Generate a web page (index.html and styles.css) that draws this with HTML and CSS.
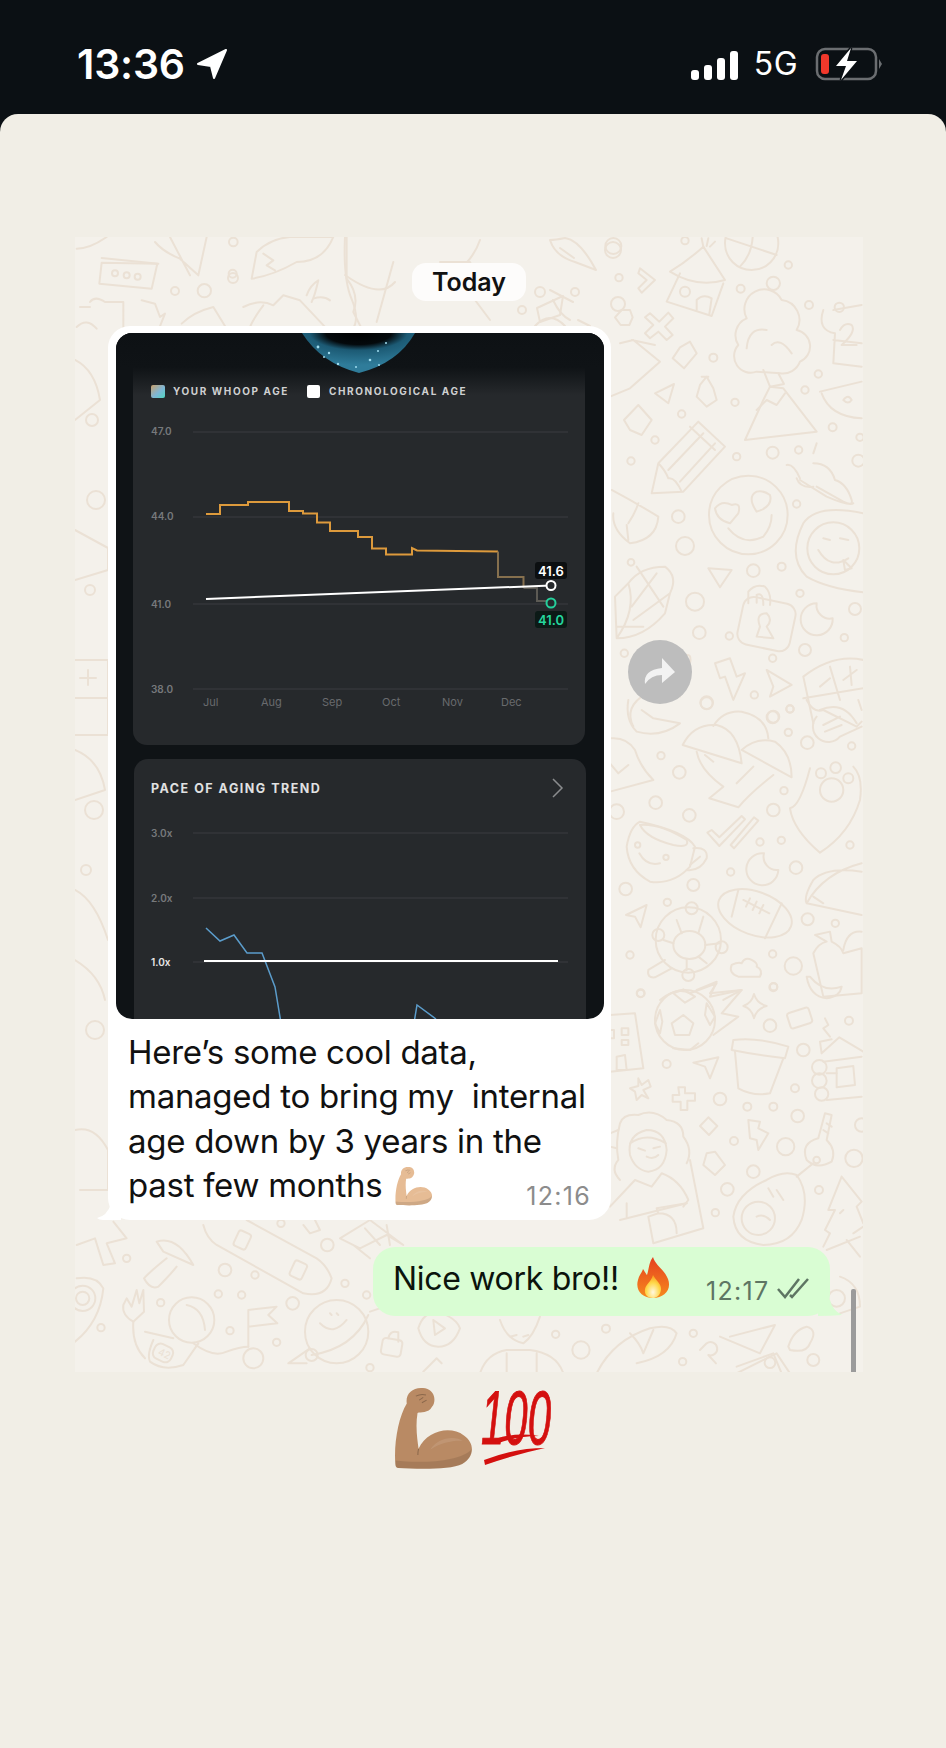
FILE: index.html
```html
<!doctype html>
<html lang="en">
  <head>
    <meta charset="UTF-8" />
    <meta name="viewport" content="width=device-width, initial-scale=1.0" />
    <title>Chat</title>
    <link rel="stylesheet" href="styles.css">
  </head>
  <body>
    <svg class="defs" width="0" height="0">
      <defs>
        <symbol id="arm" viewBox="0 0 232 250">
          <path fill="currentColor" d="M1 232C-4 172 10 92 35 52C30 22 55 0 90 7C120 14 123 47 110 62C100 82 75 77 67 80C60 122 67 162 70 187C95 132 165 117 205 147C240 172 235 212 200 232C165 250 65 247 10 244Q1 244 1 232Z"/>
          <path fill="#000" fill-opacity=".1" d="M1 232C3 240 5 244 10 244C65 247 165 250 200 232C220 220 228 205 228 188C200 222 90 232 1 222Z"/>
          <path fill="#fff" fill-opacity=".1" d="M105 190C125 155 175 145 205 165C190 160 140 165 105 190Z"/>
          <path fill="none" stroke="#000" stroke-opacity=".25" stroke-width="3" d="M70 187Q68 195 68 205M62 30Q78 22 92 27M72 42L84 34M80 50L94 42"/>
        </symbol>
        <linearGradient id="flame" x1="0" y1="0" x2="0" y2="1">
          <stop offset="0" stop-color="#e5401f"/>
          <stop offset="1" stop-color="#f68a1e"/>
        </linearGradient>
        <radialGradient id="flameCore" cx=".5" cy=".75" r=".7">
          <stop offset="0" stop-color="#fff8e0"/>
          <stop offset=".6" stop-color="#ffd84a"/>
          <stop offset="1" stop-color="#fba01f"/>
        </radialGradient>
        <linearGradient id="swatch" x1="0" y1="0" x2="1" y2="1">
          <stop offset="0" stop-color="#c9a06a"/>
          <stop offset=".55" stop-color="#7fb6d6"/>
          <stop offset="1" stop-color="#4fd6c0"/>
        </linearGradient>
        <radialGradient id="orb" cx=".5" cy="0" r=".8">
          <stop offset="0" stop-color="#000"/>
          <stop offset=".36" stop-color="#04090c"/>
          <stop offset=".54" stop-color="#1c5a74"/>
          <stop offset="1" stop-color="#2f7c9a"/>
        </radialGradient>
        <linearGradient id="topShade" x1="0" y1="0" x2="0" y2="1">
          <stop offset="0" stop-color="#0d1114"/>
          <stop offset=".55" stop-color="#0f1316"/>
          <stop offset="1" stop-color="#0f1316" stop-opacity="0"/>
        </linearGradient>
      </defs>
    </svg>

    <header class="status-bar">
      <div class="status-left">
        <span class="clock">13:36</span>
        <svg class="location" width="32" height="32" viewBox="0 0 32 32">
          <path d="M30 2L2 16L15 18L18 30Z"/>
        </svg>
      </div>
      <div class="status-right">
        <div class="signal">
          <span class="bar bar-1"></span>
          <span class="bar bar-2"></span>
          <span class="bar bar-3"></span>
          <span class="bar bar-4"></span>
        </div>
        <span class="network">5G</span>
        <svg class="battery" width="67" height="34" viewBox="0 0 67 34">
          <rect x="2" y="2" width="59" height="30" rx="8" fill="none" stroke="#6b6e71" stroke-width="2.5"/>
          <rect x="6" y="7" width="8" height="20" rx="3" fill="#f0382b"/>
          <path class="bolt" d="M36 1L21 19H31L26 33L42 14H32Z"/>
          <path d="M64 12L67 17L64 22Z" fill="#6b6e71"/>
        </svg>
      </div>
    </header>

    <main class="sheet">
      <section class="chat">
        <svg class="wallpaper" viewBox="75 237 788 1135" width="788" height="1135">
          <!-- top middle -->
          <g>
            <path d="M345 237Q343 280 352 300Q360 320 352 330M480 240Q470 270 432 285M345 275Q380 300 395 282"/>
            <path d="M550 240Q555 256 575 262L596 270Q580 240 565 238Q555 240 550 240ZM560 248L574 258M550 290L573 302"/>
            <path d="M455 290Q480 280 470 262L440 262M475 300L490 320"/>
            <circle cx="613" cy="250" r="8"/><circle cx="233" cy="278" r="5"/><circle cx="575" cy="292" r="4"/>
            <circle cx="540" cy="292" r="5"/><circle cx="618" cy="304" r="7"/><circle cx="522" cy="310" r="4"/>
            <path d="M553 300Q560 315 570 320M578 320L590 326M535 326Q550 310 565 326"/>
            <path d="M537 308L563 296L560 315L540 322Z"/>
          </g>

          <!-- left strip -->
          <g>
            <path d="M75 660H108V735H75M75 698H108M88 670V685M80 678H96M75 890Q95 900 108 940M75 1130Q95 1125 108 1150V1190H80"/>
            <circle cx="92" cy="420" r="6"/><circle cx="96" cy="500" r="9"/><circle cx="90" cy="590" r="5"/>
            <circle cx="94" cy="810" r="9"/><circle cx="86" cy="870" r="5"/><circle cx="95" cy="1030" r="9"/>
            <path d="M75 360Q95 370 100 400L75 420M75 960Q100 975 105 1000M75 530L108 548V570L75 580M75 750Q100 760 105 790L75 800"/>
          </g>

          <g transform="translate(70 232) scale(.3333)">
            <path d="M95 92L262 95L245 170L88 155Z"/><path d="M95 78L265 95"/>
            <circle cx="135" cy="124" r="9"/><circle cx="170" cy="130" r="9"/><circle cx="203" cy="134" r="9"/>
            <path d="M20 50Q60 50 110 15M255 30Q280 60 330 80L385 130L410 15M300 15L360 130"/>
            <path d="M545 140L560 60Q600 20 660 15L790 15Q760 90 680 90Q610 130 545 140ZM580 65L610 85L590 100L615 115"/>
            <path d="M830 15V140Q870 190 850 240L880 300M970 90L920 270"/>
            <path d="M520 225Q570 200 610 220L640 190L690 205L770 290M710 190Q720 160 745 145Q735 190 725 210M730 200Q760 190 780 205M580 220Q550 260 540 285"/>
            <circle cx="490" cy="30" r="13"/><circle cx="488" cy="125" r="12"/><circle cx="403" cy="176" r="20"/><circle cx="315" cy="177" r="12"/>
            <path d="M30 225H60M60 210Q75 190 105 210H160V290M215 205L255 215L270 255L285 245L265 295M335 275Q370 240 430 225L470 290M20 285Q50 255 80 290"/>
          </g>

          <g transform="translate(600 230) scale(.3333)">
            <path d="M240 130L200 215L335 258L370 160"/>
            <path d="M210 125Q260 95 310 50L375 150Q290 175 210 125Z"/>
            <path d="M290 240V210Q310 190 335 205L328 252M310 50L305 25M320 48L325 25M330 50L345 35"/>
            <circle cx="255" cy="185" r="15"/>
            <circle cx="455" cy="40" r="80"/><path d="M380 25L530 75M420 110Q470 60 455 -30"/>
            <path d="M150 250L178 275L205 248L220 265L195 290L218 315L200 330L175 305L150 325L135 310L160 285L135 262Z"/>
            <path d="M65 240H90L98 262L88 285H62L45 262Z"/>
            <path d="M120 115L165 150L125 188L115 175L140 150L115 130Z"/>
            <path d="M240 352L270 335L290 370L252 415L218 385Z"/>
            <path d="M300 465L320 440L340 475L350 510L320 530L290 500ZM305 440H325"/>
            <path d="M165 490L222 462L205 520Z"/>
            <path d="M72 570L115 525L155 570L125 615L90 600Z"/>
            <path d="M60 340L100 330L180 395L90 475L30 500M95 330L165 345"/>
            <path d="M470 425A50 50 0 0 1 415 345A55 55 0 0 1 440 265A55 55 0 0 1 545 210A60 60 0 0 1 590 300A50 50 0 0 1 600 395A55 55 0 0 1 540 430Z"/>
            <path d="M440 355Q445 290 500 300M515 345Q540 320 575 370M490 420L510 470L552 462L535 430"/>
            <path d="M435 630L650 605L550 475L510 470L490 510Z"/>
            <path d="M470 540L500 510L530 525L555 490"/>
            <path d="M700 240L785 225M670 240Q650 300 705 310L700 400L785 410M700 330L785 340"/>
            <circle cx="718" cy="232" r="14"/>
            <path d="M720 300Q735 275 755 285Q770 305 725 345H770"/>
            <path d="M660 485L785 455M665 490Q690 560 785 565M730 510Q745 490 755 510Q745 525 730 510Z"/>
            <path d="M155 790L175 700L295 575L375 650L250 785ZM175 700Q195 720 205 745Q225 740 245 785M205 720L310 610M240 755L345 640M270 590L345 660"/>
            <circle cx="445" cy="855" r="118"/>
            <path d="M390 880Q350 870 345 835Q365 810 395 825Q425 815 415 850Z"/>
            <path d="M470 845Q440 800 470 785Q490 780 510 795Q520 830 470 845Z"/>
            <path d="M385 895Q430 950 490 920Q515 890 515 855"/>
            <path d="M35 780Q110 820 175 860Q170 930 90 940Q35 900 40 850M85 880Q105 850 115 820M85 930L80 885"/>
            <path d="M650 770L730 815Q760 830 755 810Q740 760 705 750Q690 700 640 700M640 670L650 640M600 745Q580 700 560 705M600 750L680 800Q750 830 760 820M590 745Q600 775 640 770"/>
            <path d="M790 850Q650 820 610 880Q560 980 620 1040Q680 1075 790 1087"/>
            <circle cx="700" cy="955" r="78"/>
            <path d="M655 960Q690 1020 745 985M670 925L690 930M720 925L745 930M730 990L755 1015L735 1020Z"/>
            <path d="M50 1225L45 1100L85 1060Q120 1010 195 1010Q235 1040 210 1090L195 1150Q130 1225 50 1225ZM110 1010L190 1130M85 1060Q110 1140 50 1225M130 1190L50 1190M210 1090L100 1170M170 1030L95 1130"/>
            <path d="M325 1015L395 1020L360 1072Z"/>
            <rect x="420" y="1110" width="160" height="145" rx="32" transform="rotate(12 500 1180)"/>
            <path d="M445 1120V1085Q465 1060 495 1070Q515 1090 510 1125M470 1118V1095Q490 1085 490 1125M480 1190Q465 1150 500 1150Q520 1170 500 1190L520 1225L470 1220Z"/>
            <path d="M650 1120A48 48 0 1 0 698 1165A40 40 0 0 1 650 1120Z"/>
            <path d="M345 1300L390 1285L410 1340L435 1330L400 1410L375 1340L360 1345Z"/>
            <path d="M500 1320L575 1365L510 1400L520 1370Z"/>
            <path d="M610 1340Q700 1270 790 1290M610 1340L640 1480M690 1310L720 1410M610 1405L790 1375M660 1370L690 1345M730 1350L770 1320M750 1310L755 1365M660 1440Q730 1410 770 1480"/>
            <path d="M100 1490Q70 1430 140 1390Q200 1360 240 1400M220 1300Q280 1250 270 1300"/>
            <circle cx="40" cy="48" r="24"/><circle cx="255" cy="32" r="11"/><circle cx="57" cy="143" r="11"/>
            <circle cx="565" cy="105" r="11"/><circle cx="520" cy="160" r="20"/><circle cx="422" cy="176" r="12"/>
            <circle cx="627" cy="225" r="12"/><circle cx="655" cy="432" r="11"/><circle cx="615" cy="480" r="11"/>
            <circle cx="340" cy="383" r="12"/><circle cx="405" cy="517" r="11"/><circle cx="245" cy="552" r="11"/>
            <circle cx="165" cy="630" r="11"/><circle cx="93" cy="693" r="11"/><circle cx="410" cy="680" r="11"/>
            <circle cx="518" cy="668" r="18"/><circle cx="596" cy="660" r="11"/><circle cx="698" cy="592" r="12"/>
            <circle cx="780" cy="622" r="11"/><circle cx="775" cy="692" r="18"/><circle cx="235" cy="860" r="19"/>
            <circle cx="255" cy="948" r="27"/><circle cx="93" cy="997" r="10"/><circle cx="590" cy="822" r="11"/>
            <circle cx="460" cy="1022" r="19"/><circle cx="545" cy="1010" r="12"/><circle cx="285" cy="1115" r="27"/>
            <circle cx="298" cy="1208" r="19"/><circle cx="388" cy="1218" r="11"/><circle cx="600" cy="1090" r="11"/>
            <circle cx="765" cy="1137" r="18"/><circle cx="733" cy="1223" r="11"/><circle cx="615" cy="1260" r="18"/>
            <circle cx="518" cy="1285" r="11"/><circle cx="463" cy="1395" r="11"/><circle cx="320" cy="1418" r="19"/>
            <circle cx="518" cy="1462" r="18"/><circle cx="570" cy="1437" r="11"/><circle cx="73" cy="1270" r="11"/>
          </g>

          <g transform="translate(610 700) scale(.3333)">
            <path d="M218 135Q250 70 320 75Q385 90 395 190Z"/>
            <path d="M310 78Q340 30 395 35Q470 50 475 115"/>
            <path d="M395 150Q440 110 495 125Q545 160 545 232Z"/>
            <path d="M260 155Q270 210 340 260L298 295L385 322Q420 280 490 225M380 250L430 200M285 165L310 185"/>
            <path d="M600 205Q570 320 540 325Q550 390 630 458Q720 400 750 300Q760 230 730 200"/>
            <circle cx="633" cy="220" r="15"/><circle cx="677" cy="203" r="16"/><circle cx="715" cy="235" r="15"/><circle cx="665" cy="270" r="35"/>
            <path d="M90 365Q60 380 50 440Q55 510 120 545Q190 555 240 500L255 440Q230 395 90 365Z"/>
            <path d="M90 375Q150 370 230 420Q240 445 190 435Q110 415 90 375Z"/>
            <path d="M250 445Q295 440 290 475Q270 515 230 510M240 495L270 470M88 460Q110 500 150 490"/>
            <circle cx="83" cy="435" r="8"/><circle cx="168" cy="472" r="8"/>
            <path d="M292 398L305 390L328 412L395 348L405 358L328 438Z"/>
            <path d="M362 435L432 352L445 362L372 445Z"/>
            <path d="M462 460A48 48 0 1 0 505 510A40 40 0 0 1 462 460Z"/>
            <ellipse cx="435" cy="640" rx="115" ry="65" transform="rotate(20 435 640)"/>
            <path d="M385 570L365 650M515 610L465 715M400 600L478 640M420 595L408 620M440 605L428 630M460 615L448 640"/>
            <path d="M755 515Q650 500 610 540Q580 590 590 610L755 645M590 610Q640 520 755 490M610 590L640 610"/>
            <circle cx="235" cy="720" r="98"/><ellipse cx="238" cy="735" rx="48" ry="42"/>
            <path d="M200 660L215 700M280 650L265 700M160 720L190 730M330 730L285 735M230 810V780M290 790L265 770"/>
            <circle cx="245" cy="625" r="18"/><circle cx="145" cy="705" r="18"/><circle cx="335" cy="742" r="18"/><circle cx="235" cy="825" r="18"/>
            <path d="M165 780L115 810Q110 835 135 832L185 805"/>
            <path d="M610 760Q625 730 650 725L615 705L660 695L665 725Q695 740 700 760L755 745V880L640 890Z"/>
            <path d="M590 830Q600 890 650 895Q690 890 695 860Q640 880 600 830ZM700 750Q710 690 755 695"/>
            <path d="M385 830Q355 820 365 795Q385 785 395 790Q405 770 425 780Q445 790 440 800Q460 810 450 830Z"/>
            <path d="M48 645L110 615L92 682L75 650Z"/>
            <path d="M0 115Q50 110 75 150Q90 200 130 240L0 275M0 190L25 220L55 195"/>
            <path d="M55 0Q45 60 80 95Q150 115 210 70L130 55L95 30"/>
            <path d="M590 0Q610 40 640 30L740 80L755 65M620 50A40 40 0 0 0 690 110L755 80M640 75L690 50M645 95L695 75M745 0L755 30"/>
            <path d="M150 900Q200 860 240 880L320 850L300 880L395 870L340 900"/>
            <circle cx="290" cy="10" r="18"/><circle cx="490" cy="50" r="18"/><circle cx="540" cy="27" r="11"/>
            <circle cx="535" cy="97" r="11"/><circle cx="592" cy="128" r="19"/><circle cx="725" cy="138" r="11"/>
            <circle cx="153" cy="167" r="11"/><circle cx="208" cy="217" r="19"/><circle cx="137" cy="308" r="19"/>
            <circle cx="238" cy="346" r="19"/><circle cx="20" cy="335" r="22"/><circle cx="522" cy="272" r="11"/>
            <circle cx="490" cy="330" r="19"/><circle cx="720" cy="435" r="11"/><circle cx="514" cy="421" r="11"/>
            <circle cx="450" cy="426" r="11"/><circle cx="558" cy="503" r="19"/><circle cx="362" cy="516" r="11"/>
            <circle cx="250" cy="555" r="18"/><circle cx="47" cy="567" r="19"/><circle cx="172" cy="607" r="11"/>
            <circle cx="593" cy="658" r="18"/><circle cx="676" cy="670" r="11"/><circle cx="488" cy="762" r="11"/>
            <circle cx="550" cy="798" r="26"/><circle cx="60" cy="765" r="11"/><circle cx="92" cy="880" r="11"/>
            <circle cx="491" cy="860" r="11"/>
          </g>

          <g transform="translate(610 980) scale(.3333)">
            <circle cx="225" cy="120" r="90"/>
            <path d="M220 105L250 130L238 165L195 165L185 130Z"/>
            <path d="M190 40L220 28L255 50L225 68ZM290 70L315 110L300 135L285 105ZM150 90L135 130L150 160L157 125ZM190 205L240 210L265 190"/>
            <path d="M260 30L320 5L300 50L395 30L335 100L385 110L310 165"/>
            <path d="M432 42Q440 70 470 78Q440 85 432 115Q425 85 400 78Q425 70 432 42Z"/>
            <rect x="535" y="90" width="68" height="48" rx="8" transform="rotate(-18 569 114)"/>
            <path d="M370 180Q440 170 535 200L525 235Q440 225 365 210Z"/>
            <path d="M375 215L385 325Q430 350 480 340L520 235"/>
            <path d="M760 215L688 172L635 220L630 185L665 178M640 245L755 230M650 280H680M650 360L755 350"/>
            <circle cx="628" cy="262" r="22"/><circle cx="628" cy="302" r="22"/><circle cx="635" cy="342" r="20"/>
            <path d="M680 265L730 258L735 315L680 322ZM645 115L655 135L640 145L660 170"/>
            <path d="M0 105L75 100L100 265L0 275M35 145H55V165H35ZM35 180H55V195H35ZM0 150H12V175H0ZM20 230L45 225L50 270H20Z"/>
            <path d="M250 248L325 232L300 295L285 260Z"/>
            <path d="M85 295L95 315L115 300L122 320L100 330L115 355L95 345L80 360L75 335L60 325L85 318Z"/>
            <path d="M205 322H225V340H255V362H232V390H212V365H188V345H208Z"/>
            <path d="M295 412L322 438L297 465L270 438Z"/>
            <path d="M415 420L450 425L445 445L475 460L445 510L440 480L420 475Z"/>
            <path d="M645 400L665 405L650 480Q680 510 665 545Q620 570 590 540Q570 490 625 475Z"/>
            <circle cx="620" cy="540" r="10"/><path d="M610 550L560 590M650 430L665 440M640 450L655 460"/>
            <path d="M30 600Q0 570 25 540Q15 490 30 430Q40 400 85 405Q130 385 170 420Q220 425 220 470Q250 510 230 550"/>
            <path d="M60 525Q50 465 110 450Q165 450 170 510Q165 570 115 575Q75 570 60 525ZM60 490Q110 455 168 490M85 505L105 512M130 505L150 500M110 530Q130 540 145 525"/>
            <path d="M0 680L75 600L125 620L155 580Q210 600 235 660L220 680M50 670V710M30 720L230 670"/>
            <path d="M240 540L280 745L130 790L115 710L145 700L140 685L230 670M145 700Q200 700 200 760"/>
            <path d="M290 520L315 515L345 555L315 585L280 555Z"/>
            <path d="M560 585Q600 640 575 720Q545 795 460 795Q375 785 370 710Q380 640 470 600Q520 570 560 585Z"/>
            <circle cx="445" cy="715" r="50"/><path d="M475 625L490 650M500 630L520 660M440 710Q460 700 480 720"/>
            <path d="M695 590L755 665L740 680L760 730M695 590L655 690L675 690L645 750L660 760L640 800M690 700L700 690M730 760L760 740"/>
            <path d="M0 460L25 450M0 500L20 505"/>
            <circle cx="92" cy="40" r="12"/><circle cx="490" cy="22" r="12"/><circle cx="717" cy="122" r="12"/>
            <circle cx="480" cy="137" r="19"/><circle cx="580" cy="210" r="19"/><circle cx="170" cy="252" r="12"/>
            <circle cx="555" cy="325" r="12"/><circle cx="330" cy="357" r="19"/><circle cx="412" cy="380" r="12"/>
            <circle cx="490" cy="380" r="12"/><circle cx="563" cy="408" r="19"/><circle cx="372" cy="483" r="12"/>
            <circle cx="527" cy="500" r="26"/><circle cx="732" cy="535" r="26"/><circle cx="430" cy="575" r="19"/>
            <circle cx="352" cy="628" r="19"/><circle cx="627" cy="630" r="12"/><circle cx="316" cy="698" r="11"/>
            <circle cx="755" cy="435" r="20"/>
          </g>

          <g transform="translate(70 1215) scale(.3333)">
            <path d="M20 90L75 70L100 150L135 145L110 85L170 70L130 20"/>
            <path d="M260 80Q320 60 370 150L280 110Z"/>
            <path d="M290 130Q240 170 222 190Q240 225 265 215Q300 180 320 155"/>
            <path d="M400 30Q410 70 440 90L700 235Q770 250 785 190Q770 150 740 130L530 15"/>
            <rect x="497" y="50" width="40" height="50" rx="8" transform="rotate(25 517 75)"/>
            <rect x="665" y="140" width="40" height="50" rx="8" transform="rotate(25 685 165)"/>
            <circle cx="365" cy="315" r="68"/>
            <path d="M350 270Q400 280 405 345"/>
            <path d="M170 250L185 275L200 225L208 265L220 225L222 290L190 320Q155 300 160 270Z"/>
            <path d="M190 320Q185 390 225 430M225 350L310 370M250 375Q230 420 240 440Q280 470 340 450L385 385"/>
            <rect x="250" y="390" width="58" height="48" rx="18" transform="rotate(25 279 414)"/>
            <text class="wall-text" x="265" y="425" transform="rotate(25 279 414)">42</text>
            <path d="M535 395V285L620 275L595 300L622 325L535 335"/>
            <path d="M370 385Q430 430 470 410Q510 395 535 395"/>
            <circle cx="550" cy="430" r="30"/>
            <circle cx="800" cy="350" r="95"/>
            <path d="M750 325Q790 365 830 315M780 295L785 300M800 295L805 300"/>
            <path d="M655 445L720 400M900 290L945 275M725 420Q850 400 895 300M655 445L710 445"/>
            <circle cx="725" cy="420" r="18"/>
            <path d="M20 190Q80 180 100 220Q90 320 15 380"/>
            <circle cx="38" cy="250" r="20"/><circle cx="38" cy="250" r="38"/>
            <path d="M810 70L900 15L1000 90L950 60L870 100ZM850 90L900 130M930 90L885 40M960 90L950 30"/>
            <path d="M1045 340Q1060 290 1105 290Q1160 310 1170 340Q1150 395 1105 395Q1060 395 1045 340ZM1090 315L1125 340L1095 360Z"/>
            <rect x="935" y="372" width="60" height="50" rx="10" transform="rotate(10 965 397)"/>
            <path d="M955 370Q960 345 985 352L985 380M1060 470L1100 430L1115 445"/>
            <path d="M700 30L720 55L750 45L735 15"/>
            <circle cx="170" cy="130" r="11"/><circle cx="465" cy="165" r="19"/><circle cx="555" cy="180" r="11"/>
            <circle cx="825" cy="205" r="11"/><circle cx="445" cy="237" r="11"/><circle cx="515" cy="240" r="11"/>
            <circle cx="668" cy="265" r="19"/><circle cx="890" cy="240" r="11"/><circle cx="272" cy="263" r="11"/>
            <circle cx="93" cy="338" r="11"/><circle cx="480" cy="347" r="11"/><circle cx="620" cy="382" r="11"/>
            <circle cx="772" cy="90" r="19"/><circle cx="633" cy="25" r="11"/><circle cx="900" cy="458" r="11"/>
          </g>

          <g transform="translate(360 1230) scale(.3333)">
            <path d="M400 250Q440 200 510 240M420 270Q440 330 490 340Q520 320 540 260M360 430Q380 370 440 360L510 360Q590 370 610 430M440 370V430M530 370V430M450 320L470 315M490 320L505 315"/>
            <circle cx="663" cy="360" r="26"/><circle cx="738" cy="296" r="12"/><circle cx="587" cy="313" r="11"/>
            <circle cx="1000" cy="310" r="11"/><circle cx="968" cy="395" r="11"/><circle cx="1360" cy="390" r="18"/>
            <path d="M710 430Q760 330 870 295Q930 280 950 310Q930 380 830 400M810 310Q840 340 850 370L880 300"/>
            <path d="M1020 360L1040 340A20 20 0 1 1 1045 375L1068 400"/>
            <path d="M1110 320L1245 285L1200 370L1080 320M1130 430L1250 370L1290 430"/>
            <path d="M1285 350Q1300 300 1340 290Q1375 300 1350 340Q1340 370 1290 360Z"/>
            <path d="M1440 140Q1500 160 1500 230L1440 250"/>
            <circle cx="1430" cy="205" r="25"/><circle cx="1230" cy="398" r="16"/>
            <path d="M1130 410L1240 370L1265 430"/>
            <path d="M1400 60L1500 20M1460 30L1500 80"/>
          </g>
        </svg>

        <div class="chat-content">
          <div class="day-pill">Today</div>

          <div class="row-in">
            <article class="bubble-in">
              <svg class="tail-in" width="24" height="24" viewBox="0 0 24 24">
                <path d="M0 22Q10 20 14 8L24 0V24L6 24Q2 24 0 22Z"/>
              </svg>
              <div class="photo">
                <svg width="488" height="686" viewBox="0 0 488 686">
                  <rect width="488" height="686" fill="#0f1316"/>
                  <rect x="17" y="15" width="452" height="397" rx="14" fill="#26292c"/>
                  <rect x="0" y="0" width="488" height="62" fill="url(#topShade)"/>
                  <path d="M186 0Q205 30 243 40Q282 30 299 0Z" fill="url(#orb)"/>
                  <g fill="#9fdcef">
                    <circle cx="202" cy="14" r="1.4"/><circle cx="213" cy="20" r="1.2"/><circle cx="222" cy="31" r="1.2"/>
                    <circle cx="240" cy="34" r="1"/><circle cx="254" cy="27" r="1.3"/><circle cx="263" cy="32" r="1"/>
                    <circle cx="270" cy="10" r="1"/><circle cx="262" cy="18" r="1"/><circle cx="208" cy="24" r="1"/>
                  </g>

                  <rect x="35" y="52" width="14" height="13" rx="2" fill="url(#swatch)"/>
                  <text class="legend" x="57" y="62">YOUR WHOOP AGE</text>
                  <rect x="191" y="52" width="13" height="13" rx="2" fill="#fff"/>
                  <text class="legend" x="213" y="62">CHRONOLOGICAL AGE</text>

                  <path class="grid-line" d="M77 99H452M77 184H452M77 271H452M77 356H452"/>
                  <g class="axis">
                    <text x="35" y="102">47.0</text>
                    <text x="35" y="187">44.0</text>
                    <text x="35" y="275">41.0</text>
                    <text x="35" y="360">38.0</text>
                  </g>
                  <g class="months">
                    <text x="87" y="373">Jul</text>
                    <text x="145" y="373">Aug</text>
                    <text x="206" y="373">Sep</text>
                    <text x="266" y="373">Oct</text>
                    <text x="326" y="373">Nov</text>
                    <text x="385" y="373">Dec</text>
                  </g>

                  <path class="line-orange" d="M90 181H104V172H132V169H173V178H187V180.500H201V189.500H214V198H242V204H256V215.500H270V221.500H296V215L301 217.500L382 218.500"/>
                  <path class="line-orange-fade" d="M382 218.500V244H407.500V255"/>
                  <path class="line-orange-end" d="M407.500 255H421V268H435"/>
                  <path class="line-white" d="M90 266L435 252.500"/>
                  <circle class="dot-white" cx="435" cy="252.500" r="4.500"/>
                  <circle class="dot-green" cx="435" cy="270" r="4.500"/>
                  <rect x="419" y="229" width="32" height="17" rx="3" fill="#0c0f11"/>
                  <text class="tag tag-white" x="435" y="243">41.6</text>
                  <rect x="419" y="278" width="32" height="17" rx="3" fill="#0c1a17"/>
                  <text class="tag tag-green" x="435" y="292">41.0</text>

                  <rect x="18" y="426" width="452" height="280" rx="14" fill="#26292c"/>
                  <text class="card-title" x="35" y="459.500">PACE OF AGING TREND</text>
                  <path class="chevron" d="M437 446L446 455L437 464"/>
                  <path class="grid-line" d="M77 500H452M77 565H452M77 629H452"/>
                  <g class="axis">
                    <text x="35" y="504">3.0x</text>
                    <text x="35" y="569">2.0x</text>
                    <text class="axis-on" x="35" y="633">1.0x</text>
                  </g>
                  <path class="line-blue" d="M90 595L104 608L118 602L131 620H146L159 654L165 690M298 690L301 672L320 686"/>
                  <path class="line-white" d="M88 628H442"/>
                </svg>
              </div>
              <div class="msg-text">
                Here’s some cool data,<br>
                managed to bring my&nbsp; internal<br>
                age down by 3 years in the
                <div class="last-line">
                  <span class="last-words">past few months
                    <svg class="emoji-arm-small" width="38" height="40"><use href="#arm"/></svg>
                  </span>
                  <span class="time">12:16</span>
                </div>
              </div>
            </article>

            <div class="forward">
              <svg width="64" height="64" viewBox="0 0 64 64">
                <path d="M17 44Q15 30 34 28V18L47 32L34 43V35Q23 35 17 44Z"/>
              </svg>
            </div>
          </div>

          <div class="row-out">
            <article class="bubble-out">
              <svg class="tail-out" width="24" height="24" viewBox="0 0 24 24">
                <path d="M0 0L12 8Q14 18 24 23Q12 24 0 24Z"/>
              </svg>
              <span class="out-text">Nice work bro!!</span>
              <svg class="emoji-fire" width="34" height="41" viewBox="0 0 34 41">
                <path d="M17 0C19 8 28 12 32 22C36 33 28 41 17 41C6 41 -1 33 2 23C3 18 6 16 7 12C9 15 10 17 11 18C13 12 13 5 17 0Z" fill="url(#flame)"/>
                <path d="M17 18C20 24 26 27 25 33C24 39 20 41 17 41C12 41 8 38 9 32C10 27 15 25 17 18Z" fill="url(#flameCore)"/>
              </svg>
              <span class="time time-out">12:17</span>
              <svg class="ticks" width="32" height="22" viewBox="0 0 32 22">
                <path d="M1 12L8 20L22 2M13 18L15 20L31 2"/>
              </svg>
            </article>
          </div>
        </div>

        <div class="scroll-thumb"></div>
      </section>

      <div class="reactions">
        <svg class="emoji-arm" width="78" height="84"><use href="#arm"/></svg>
        <svg class="emoji-100" width="74" height="80" viewBox="0 0 74 80">
          <text class="hundred" x="0" y="58" textLength="70" lengthAdjust="spacingAndGlyphs">100</text>
          <path d="M14 53Q34 46 58 50Q36 50 15 58Z"/>
          <path d="M3 74Q34 62 64 62Q36 68 4 79Z"/>
        </svg>
      </div>
    </main>
  </body>
</html>
```

FILE: styles.css
```css
body {
  margin: 0;
  background: #0b1014;
  font-family: Inter, "Liberation Sans", sans-serif;
  color: #111;
}
.defs {
  position: absolute;
}

/* status bar */
.status-bar {
  height: 114px;
  box-sizing: border-box;
  padding: 44px 64px 0 77px;
  display: flex;
  justify-content: space-between;
  align-items: flex-start;
  color: #fff;
}
.status-left {
  display: flex;
  align-items: center;
  gap: 11px;
}
.clock {
  font-size: 41px;
  font-weight: 600;
  line-height: 40px;
  letter-spacing: -0.2px;
}
.location path {
  fill: #fff;
  stroke: #fff;
  stroke-width: 2;
  stroke-linejoin: round;
}
.status-right {
  display: flex;
  align-items: center;
  gap: 16px;
  height: 40px;
}
.signal {
  display: flex;
  align-items: flex-end;
  gap: 5px;
  height: 29px;
  margin-top: 3px;
}
.bar {
  width: 8px;
  background: #fff;
  border-radius: 3px;
}
.bar-1 { height: 10px; }
.bar-2 { height: 15px; }
.bar-3 { height: 22px; }
.bar-4 { height: 29px; }
.network {
  font-size: 32px;
  line-height: 40px;
  font-weight: 400;
  letter-spacing: 0.5px;
}
.battery {
  margin-left: 1px;
}
.bolt {
  fill: #fff;
  stroke: #0b1014;
  stroke-width: 3;
  paint-order: stroke;
}

/* sheet */
.sheet {
  background: #f1eee6;
  border-radius: 18px 18px 0 0;
  height: 1634px;
  box-sizing: border-box;
  padding-top: 123px;
  overflow: hidden;
}
.chat {
  position: relative;
  margin-left: 75px;
  width: 788px;
  height: 1135px;
  background: #f4f1eb;
}
.wallpaper {
  position: absolute;
  top: 0;
  left: 0;
  fill: none;
  stroke: #ebe1d5;
  stroke-width: 2;
  stroke-linejoin: round;
  stroke-linecap: round;
}
.wallpaper g[transform] {
  stroke-width: 6;
}
.wall-text {
  font-size: 30px;
  fill: #ebe1d5;
  stroke: none;
}
.chat-content {
  position: relative;
  display: flex;
  flex-direction: column;
}
.day-pill {
  align-self: center;
  margin-top: 26px;
  width: 114px;
  height: 38px;
  line-height: 38px;
  text-align: center;
  background: #fdfcfb;
  border-radius: 14px;
  font-size: 25px;
  font-weight: 600;
  color: #111;
}

/* messages */
.row-in {
  display: flex;
  margin-top: 25px;
  padding-left: 33px;
}
.bubble-in {
  position: relative;
  box-sizing: border-box;
  width: 503px;
  height: 894px;
  padding: 7px 7px 0 8px;
  background: #fff;
  border-radius: 22px;
}
.tail-in {
  position: absolute;
  left: -11px;
  bottom: 0;
  fill: #fff;
}
.photo {
  width: 488px;
  height: 686px;
  border-radius: 16px;
  overflow: hidden;
}
.photo svg {
  display: block;
}
.msg-text {
  padding: 11px 13px 0 12px;
  font-size: 33px;
  line-height: 44.4px;
  letter-spacing: -0.28px;
  color: #111;
}
.last-line {
  display: flex;
  justify-content: space-between;
  align-items: flex-end;
  height: 44px;
}
.last-words {
  display: flex;
  align-items: center;
  gap: 13px;
}
.emoji-arm-small {
  color: #e6bc95;
  margin-top: 2px;
}
.time {
  font-size: 25px;
  line-height: 30px;
  letter-spacing: 1.3px;
  color: #8c8c8c;
  margin-right: 0;
  margin-bottom: -4px;
}
.forward {
  width: 64px;
  height: 64px;
  margin: 314px 0 0 17px;
  border-radius: 50%;
  background: #bdbdbd;
}
.forward path {
  fill: #f2f2f2;
}
.row-out {
  display: flex;
  justify-content: flex-end;
  margin-top: 27px;
  padding-right: 33px;
}
.bubble-out {
  position: relative;
  box-sizing: border-box;
  width: 457px;
  height: 69px;
  padding-left: 20px;
  display: flex;
  align-items: center;
  background: #d9fdd3;
  border-radius: 22px;
}
.tail-out {
  position: absolute;
  right: -12px;
  bottom: 0;
  fill: #d9fdd3;
}
.out-text {
  font-size: 32px;
  letter-spacing: -0.3px;
  color: #0b140c;
  margin-top: -6px;
}
.emoji-fire {
  margin: -8px 0 0 17px;
}
.time-out {
  margin: 18px 0 0 36px;
  color: #5e7563;
}
.ticks {
  margin: 12px 0 0 8px;
  fill: none;
  stroke: #5e7563;
  stroke-width: 2.5;
}
.scroll-thumb {
  position: absolute;
  top: 1052px;
  right: 7px;
  width: 5px;
  height: 83px;
  background: #9b9b9b;
  border-radius: 2px 2px 0 0;
}

/* big reaction emoji */
.reactions {
  display: flex;
  gap: 8px;
  margin: 14px 0 0 395px;
}
.emoji-arm {
  color: #b98a64;
}
.emoji-100 {
  overflow: visible;
}
.hundred {
  font-family: "Liberation Sans", sans-serif;
  font-style: italic;
  font-size: 76px;
  fill: #d4100f;
  stroke: #d4100f;
  stroke-width: 1;
}
.emoji-100 path {
  fill: #d4100f;
}

/* the screenshot inside the first bubble */
.legend {
  font-size: 10px;
  font-weight: 700;
  letter-spacing: 1.6px;
  fill: #cfd0d1;
}
.grid-line {
  fill: none;
  stroke: #3a3c40;
  stroke-width: 1;
}
.axis {
  font-size: 10px;
  font-weight: 600;
  fill: #77797c;
}
.axis-on {
  fill: #e6e6e6;
}
.months {
  font-size: 11px;
  fill: #696b6e;
}
.line-orange {
  fill: none;
  stroke: #dd9a3c;
  stroke-width: 2;
}
.line-orange-fade {
  fill: none;
  stroke: #86704e;
  stroke-width: 2;
}
.line-orange-end {
  fill: none;
  stroke: #5c5a54;
  stroke-width: 2;
}
.line-white {
  fill: none;
  stroke: #fff;
  stroke-width: 2;
}
.line-blue {
  fill: none;
  stroke: #5b9ccb;
  stroke-width: 1.500;
}
.dot-white {
  fill: #26292c;
  stroke: #fff;
  stroke-width: 2;
}
.dot-green {
  fill: #26292c;
  stroke: #25cf9b;
  stroke-width: 2;
}
.tag {
  font-size: 13px;
  font-weight: 600;
  text-anchor: middle;
}
.tag-white { fill: #fff; }
.tag-green { fill: #25d69e; }
.card-title {
  font-size: 12.500px;
  font-weight: 700;
  letter-spacing: 1.5px;
  fill: #e0e1e2;
}
.chevron {
  fill: none;
  stroke: #8a8c8e;
  stroke-width: 1.500;
}
```
